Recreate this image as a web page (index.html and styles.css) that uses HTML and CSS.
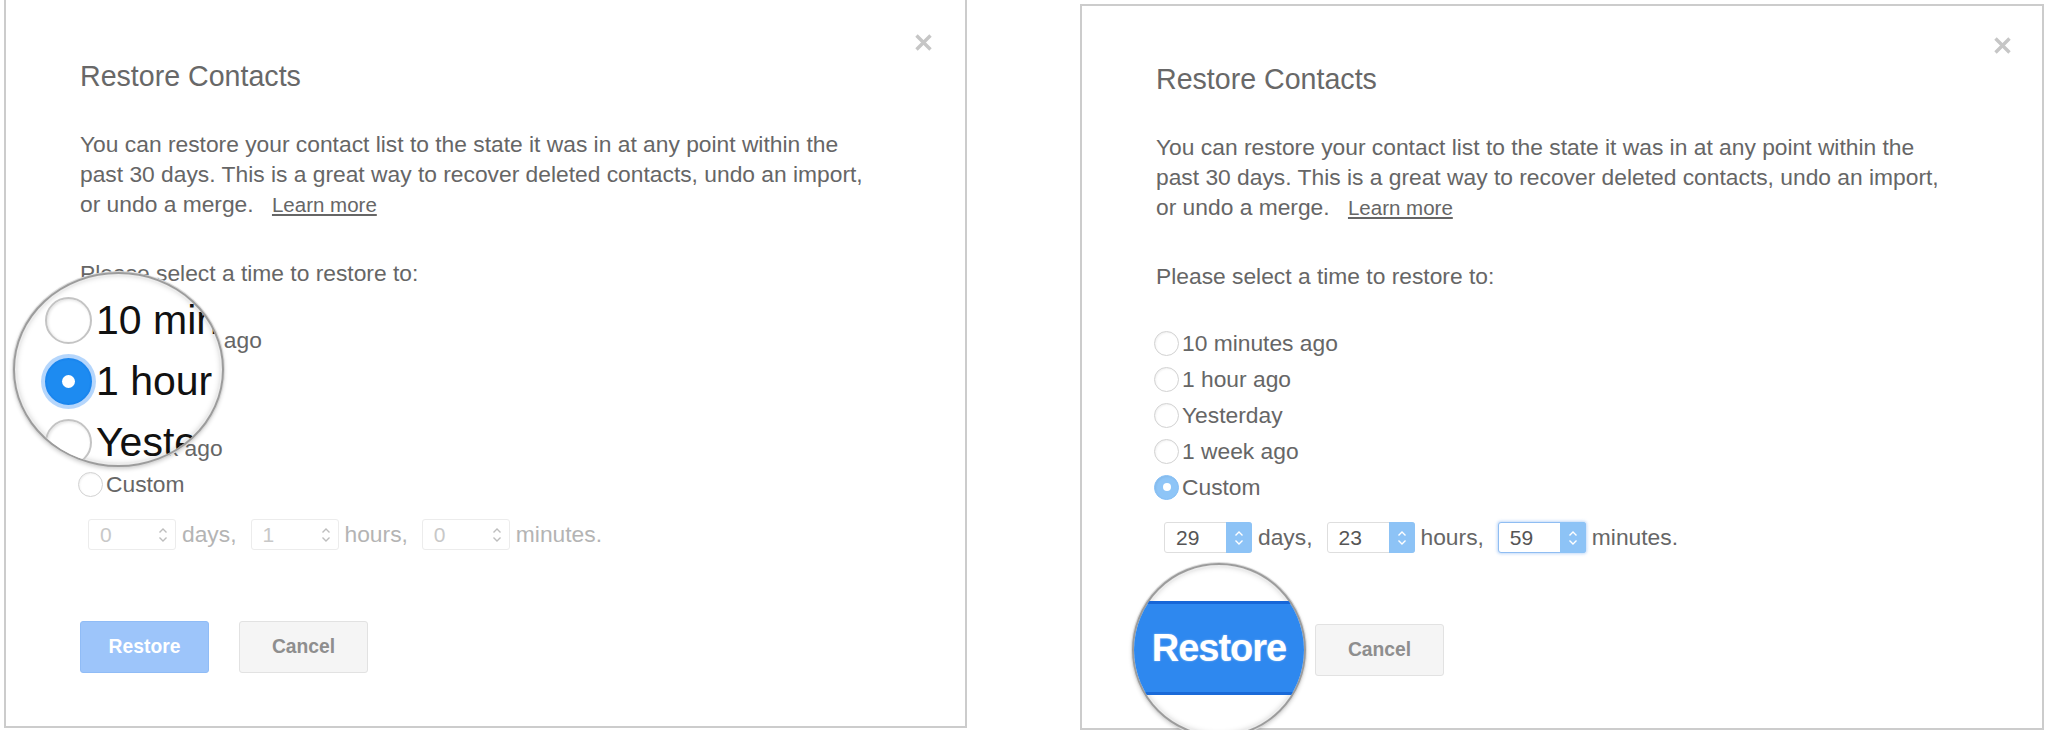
FILE: index.html
```html
<!DOCTYPE html>
<html lang="en">
<head>
    <meta charset="UTF-8">
    <meta name="viewport" content="width=device-width, initial-scale=1.0">
    <title>Restore Contacts</title>
    <link rel="stylesheet" href="styles.css">
</head>
<body>

    <div class="page">

        <!-- Dialog: preset time picked -->
        <div class="dialog dialog-left">
            <span class="close">
                <svg width="19" height="19" viewBox="0 0 19 19"><path d="M2.5 2.5 L16.5 16.5 M16.5 2.5 L2.5 16.5" stroke="#c6c6c6" stroke-width="3.4" fill="none"/></svg>
            </span>
            <h2>Restore Contacts</h2>
            <p class="intro">You can restore your contact list to the state it was in at any point within the past 30 days. This is a great way to recover deleted contacts, undo an import, or undo a merge. <a href="#">Learn more</a></p>
            <p class="prompt">Please select a time to restore to:</p>
            <ul class="options">
                <li><span class="radio"></span>10 minutes ago</li>
                <li><span class="radio checked"></span>1 hour ago</li>
                <li><span class="radio"></span>Yesterday</li>
                <li><span class="radio"></span>1 week ago</li>
                <li><span class="radio"></span>Custom</li>
            </ul>
            <div class="custom disabled">
                <div class="num"><span class="val">0</span><span class="spin"><svg width="10" height="18" viewBox="0 0 10 18"><path d="M1.5 6.5 L5 3 L8.5 6.5 M1.5 11.5 L5 15 L8.5 11.5" fill="none" stroke-width="1.4"/></svg></span></div>
                <span class="unit">days,</span>
                <div class="num"><span class="val">1</span><span class="spin"><svg width="10" height="18" viewBox="0 0 10 18"><path d="M1.5 6.5 L5 3 L8.5 6.5 M1.5 11.5 L5 15 L8.5 11.5" fill="none" stroke-width="1.4"/></svg></span></div>
                <span class="unit">hours,</span>
                <div class="num"><span class="val">0</span><span class="spin"><svg width="10" height="18" viewBox="0 0 10 18"><path d="M1.5 6.5 L5 3 L8.5 6.5 M1.5 11.5 L5 15 L8.5 11.5" fill="none" stroke-width="1.4"/></svg></span></div>
                <span class="unit">minutes.</span>
            </div>
            <div class="actions">
                <button class="btn primary" disabled>Restore</button>
                <button class="btn">Cancel</button>
            </div>

            <!-- Magnifier over the radio list -->
            <div class="lens lens-options">
                <ul class="lens-rows">
                    <li><span class="big-radio"></span>10 minutes ago</li>
                    <li><span class="big-radio on"></span>1 hour ago</li>
                    <li><span class="big-radio"></span>Yesterday</li>
                </ul>
            </div>
        </div>

        <!-- Dialog: custom time picked -->
        <div class="dialog dialog-right">
            <span class="close">
                <svg width="19" height="19" viewBox="0 0 19 19"><path d="M2.5 2.5 L16.5 16.5 M16.5 2.5 L2.5 16.5" stroke="#c6c6c6" stroke-width="3.4" fill="none"/></svg>
            </span>
            <h2>Restore Contacts</h2>
            <p class="intro">You can restore your contact list to the state it was in at any point within the past 30 days. This is a great way to recover deleted contacts, undo an import, or undo a merge. <a href="#">Learn more</a></p>
            <p class="prompt">Please select a time to restore to:</p>
            <ul class="options">
                <li><span class="radio"></span>10 minutes ago</li>
                <li><span class="radio"></span>1 hour ago</li>
                <li><span class="radio"></span>Yesterday</li>
                <li><span class="radio"></span>1 week ago</li>
                <li><span class="radio checked"></span>Custom</li>
            </ul>
            <div class="custom">
                <div class="num"><span class="val">29</span><span class="spin"><svg width="10" height="18" viewBox="0 0 10 18"><path d="M1.5 6.5 L5 3 L8.5 6.5 M1.5 11.5 L5 15 L8.5 11.5" fill="none" stroke-width="1.4"/></svg></span></div>
                <span class="unit">days,</span>
                <div class="num"><span class="val">23</span><span class="spin"><svg width="10" height="18" viewBox="0 0 10 18"><path d="M1.5 6.5 L5 3 L8.5 6.5 M1.5 11.5 L5 15 L8.5 11.5" fill="none" stroke-width="1.4"/></svg></span></div>
                <span class="unit">hours,</span>
                <div class="num focused"><span class="val">59</span><span class="spin"><svg width="10" height="18" viewBox="0 0 10 18"><path d="M1.5 6.5 L5 3 L8.5 6.5 M1.5 11.5 L5 15 L8.5 11.5" fill="none" stroke-width="1.4"/></svg></span></div>
                <span class="unit">minutes.</span>
            </div>
            <div class="actions">
                <button class="btn primary">Restore</button>
                <button class="btn">Cancel</button>
            </div>

            <!-- Magnifier over the Restore button -->
            <div class="lens lens-button">
                <div class="big-button">Restore</div>
            </div>
        </div>

    </div>

</body>
</html>
```

FILE: styles.css
```css
/* General styling */
* {
    margin: 0;
    padding: 0;
    box-sizing: border-box;
    font-family: "Liberation Sans", Arial, sans-serif;
}

body {
    background-color: #fff;
}

.page {
    display: flex;
    align-items: flex-start;
    gap: 113px;
    padding-left: 4px;
}

/* Dialog box */
.dialog {
    position: relative;
    width: 964px;
    height: 726px;
    border: 2px solid #ccc;
    padding: 56px 0 0 74px;
    color: #666;
}

.dialog-left {
    width: 963px;
    height: 728px;
    border-top: none;
    padding-top: 59px;
}

.dialog-right {
    margin-top: 4px;
}

.close {
    position: absolute;
    top: 30px;
    right: 30px;
    width: 19px;
    height: 19px;
    display: flex;
}

.dialog-left .close {
    top: 33px;
    right: 32px;
}

.dialog h2 {
    font-size: 28.6px;
    font-weight: normal;
    line-height: 34px;
    color: #686868;
}

.intro {
    margin-top: 36px;
    width: 800px;
    font-size: 22.8px;
    line-height: 30px;
}

.intro a {
    margin-left: 12px;
    font-size: 20.5px;
    color: #666;
    text-decoration: underline;
}

.prompt {
    margin-top: 38px;
    font-size: 22.8px;
    line-height: 30px;
}

/* Radio list */
.options {
    list-style-type: none;
    margin-top: 34px;
}

.options li {
    display: flex;
    align-items: center;
    height: 36px;
    font-size: 22.8px;
    line-height: 36px;
}

.radio {
    width: 25px;
    height: 25px;
    margin: 0 3px 0 -2px;
    border-radius: 50%;
    border: 1px solid #d2d2d2;
    background-color: #fff;
    box-shadow: inset 1px 1px 2px rgba(0, 0, 0, 0.06);
    display: flex;
    align-items: center;
    justify-content: center;
}

.radio.checked {
    background-color: #8ec5f7;
    border-color: #86bff5;
}

.radio.checked::after {
    content: '';
    width: 8px;
    height: 8px;
    border-radius: 50%;
    background-color: #fff;
}

/* Custom time inputs */
.custom {
    display: flex;
    align-items: center;
    margin-top: 17px;
    padding-left: 8px;
}

.num {
    display: flex;
    width: 88px;
    height: 31px;
    border: 1px solid #dedede;
    border-radius: 3px;
    background-color: #fff;
}

.num .val {
    flex: 1;
    padding-left: 11px;
    font-size: 21px;
    line-height: 29px;
    color: #555;
}

.num .spin {
    width: 26px;
    margin: -1px -1px -1px 0;
    border-radius: 0 3px 3px 0;
    background-color: #8dc3f6;
    display: flex;
    align-items: center;
    justify-content: center;
}

.num .spin path {
    stroke: #fff;
}

.num.focused {
    border-color: #8fbdf2;
    box-shadow: 0 0 3px 1px rgba(120, 172, 240, 0.45);
}

.unit {
    margin: 0 14px 0 6px;
    font-size: 22.8px;
}

.custom.disabled .num {
    border-color: #ececec;
}

.custom.disabled .val {
    color: #c8c8c8;
}

.custom.disabled .spin {
    background: none;
}

.custom.disabled .spin path {
    stroke: #bdbdbd;
}

.custom.disabled .unit {
    color: #b4b4b4;
}

/* Buttons */
.actions {
    display: flex;
    gap: 30px;
    margin-top: 71px;
}

.btn {
    width: 129px;
    height: 52px;
    border-radius: 3px;
    border: 1px solid #e2e2e2;
    background-color: #f5f5f5;
    color: #8e8e8e;
    font-size: 19.3px;
    font-weight: bold;
}

.btn.primary {
    background-color: #4a8ef5;
    border-color: #3b7fe8;
    color: #fff;
}

.btn.primary:disabled {
    background-color: #9dc5fa;
    border-color: #90bcf6;
}

/* Magnifier lenses */
.lens {
    position: absolute;
    border-radius: 50%;
    border: 2px solid #9c9c9c;
    background-color: #fff;
    overflow: hidden;
    box-shadow: 0 0 0 1px #dadada, inset 0 0 0 2px #ececec, inset 0 0 6px rgba(0, 0, 0, 0.25), 0 2px 4px rgba(0, 0, 0, 0.2);
}

.lens-options {
    left: 7px;
    top: 272px;
    width: 211px;
    height: 195px;
}

.lens-rows {
    list-style-type: none;
    padding: 16px 0 0 30px;
}

.lens-rows li {
    display: flex;
    align-items: center;
    height: 61px;
    font-size: 41px;
    line-height: 61px;
    color: #111;
    white-space: nowrap;
}

.big-radio {
    flex: none;
    width: 47px;
    height: 47px;
    margin-right: 4px;
    border-radius: 50%;
    border: 2px solid #c4c4c4;
    background-color: #fff;
    box-shadow: inset 1px 1px 3px rgba(0, 0, 0, 0.12);
    display: flex;
    align-items: center;
    justify-content: center;
}

.big-radio.on {
    border-color: #1a86ee;
    background-color: #1d8bf1;
    box-shadow: 0 0 0 4px rgba(120, 180, 250, 0.55);
}

.big-radio.on::after {
    content: '';
    width: 13px;
    height: 13px;
    border-radius: 50%;
    background-color: #fff;
}

.lens-button {
    left: 50px;
    top: 557px;
    width: 174px;
    height: 174px;
}

.big-button {
    margin-top: 36px;
    height: 94px;
    background-color: #2e88ef;
    border-top: 3px solid #1666d8;
    border-bottom: 3px solid #1a6ad8;
    color: #fff;
    font-size: 38px;
    font-weight: bold;
    letter-spacing: -1px;
    display: flex;
    align-items: center;
    justify-content: center;
    text-shadow: 0 0 2px rgba(255, 255, 255, 0.5);
}
```
